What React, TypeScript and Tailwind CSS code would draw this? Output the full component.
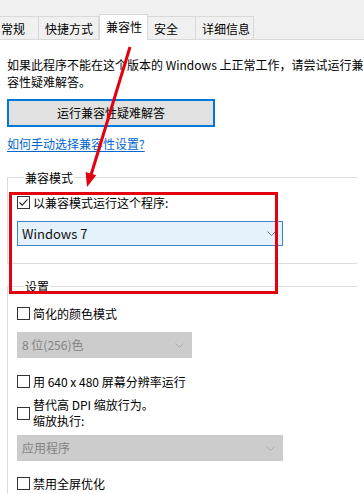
import React from "react";

const FONT = "font-['Microsoft_YaHei','Noto_Sans_CJK_SC',sans-serif]";

function Checkbox({ checked = false }: { checked?: boolean }) {
  return (
    <span className="w-[13px] h-[13px] border border-[#333333] bg-white flex items-center justify-center shrink-0">
      {checked && (
        <svg width="11" height="11" viewBox="0 0 11 11">
          <polyline
            points="1.5,5.5 4.2,8.2 9.5,2.3"
            fill="none"
            stroke="#222"
            strokeWidth="1.1"
          />
        </svg>
      )}
    </span>
  );
}

function Chevron({ color }: { color: string }) {
  return (
    <svg width="9" height="5" viewBox="0 0 9 5">
      <polyline points="0.5,0.5 4.5,4.5 8.5,0.5" fill="none" stroke={color} strokeWidth="1" />
    </svg>
  );
}

interface SelectProps {
  label: string;
  width: string;
  disabled?: boolean;
}

function Select({ label, width, disabled }: SelectProps) {
  if (disabled) {
    return (
      <div className={`${width} h-[26px] bg-[#cccccc] flex items-center justify-between pl-[5px] pr-[8px]`}>
        <span className="text-[12px] text-[#838383]">{label}</span>
        <Chevron color="#adadad" />
      </div>
    );
  }
  return (
    <div className={`${width} h-[25px] bg-[#e5f1fb] border border-[#3c87c8] flex items-center justify-between pl-[4px] pr-[6px]`}>
      <span className="text-[13px] text-[#111]">{label}</span>
      <Chevron color="#777" />
    </div>
  );
}

const tabs = [
  { label: "常规", w: "w-[45px] ml-[-6px] border-l" },
  { label: "快捷方式", w: "w-[60px]" },
  { label: "兼容性", w: "w-[49px]", active: true },
  { label: "安全", w: "w-[48px]" },
  { label: "详细信息", w: "w-[58px]" },
];

export default function App() {
  return (
    <div className={`relative w-[364px] h-[494px] overflow-hidden bg-white text-[12px] text-black ${FONT}`}>
      {/* tab strip */}
      <div className="h-[40px] bg-[#f0f0f0] flex items-end">
        {tabs.map((t) =>
          t.active ? (
            <div
              key={t.label}
              className={`${t.w} h-[26px] bg-white border-x border-t border-[#d9d9d9] pl-[6px] pt-[3px] leading-[18px] whitespace-nowrap`}
            >
              {t.label}
            </div>
          ) : (
            <div
              key={t.label}
              className={`${t.w} h-[24px] bg-[#f0f0f0] border-t border-r border-b border-[#d9d9d9] pl-[6px] leading-[24px] whitespace-nowrap`}
            >
              {t.label}
            </div>
          )
        )}
        <div className="flex-1 h-full border-b border-[#d9d9d9]" />
      </div>

      <div className="px-[7px]">
        <p className="mt-[16px] leading-[17px] whitespace-nowrap">
          如果此程序不能在这个版本的 Windows 上正常工作，请尝试运行兼容性
          <br />
          容性疑难解答。
        </p>

        <button className="mt-[9px] w-[208px] h-[28px] border-2 border-[#0078d7] bg-[#e1e1e1] flex items-center justify-center text-[12px]">
          运行兼容性疑难解答
        </button>

        <div className="mt-[8px] leading-[17px] text-[#0066cc] underline underline-offset-2">
          如何手动选择兼容性设置?
        </div>

        <fieldset className="mt-[17px] border-l border-t border-b border-[#dcdcdc] pl-[9px] pb-[17px] pt-[8px]">
          <legend className="ml-[7px] px-[1px] leading-[17px]">兼容模式</legend>
          <div className="flex items-center gap-[3px] leading-[17px]">
            <Checkbox checked />
            <span>以兼容模式运行这个程序:</span>
          </div>
          <div className="mt-[10px]">
            <Select label="Windows 7" width="w-[266px]" />
          </div>
        </fieldset>

        <fieldset className="mt-[14px] border-l border-t border-[#dcdcdc] pl-[9px] pt-[10px] pb-[20px]">
          <legend className="ml-[7px] px-[1px] leading-[17px]">设置</legend>
          <div className="flex items-center gap-[3px] leading-[17px]">
            <Checkbox />
            <span>简化的颜色模式</span>
          </div>
          <div className="mt-[10px]">
            <Select label="8 位(256)色" width="w-[175px]" disabled />
          </div>
          <div className="mt-[15px] flex items-center gap-[3px] leading-[17px]">
            <Checkbox />
            <span>用 640 x 480 屏幕分辨率运行</span>
          </div>
          <div className="mt-[7px] flex items-center gap-[3px] leading-[16px]">
            <Checkbox />
            <span>
              替代高 DPI 缩放行为。
              <br />
              缩放执行:
            </span>
          </div>
          <div className="mt-[6px]">
            <Select label="应用程序" width="w-[266px]" disabled />
          </div>
          <div className="mt-[14px] flex items-center gap-[3px] leading-[17px]">
            <Checkbox />
            <span>禁用全屏优化</span>
          </div>
        </fieldset>
      </div>

      {/* red annotations */}
      <div className="absolute left-[9px] top-[192px] w-[269px] h-[102px] border-[3px] border-[#e3000f] pointer-events-none" />
      <svg
        className="absolute left-0 top-0 pointer-events-none"
        width="364"
        height="494"
        viewBox="0 0 364 494"
      >
        <line x1="130" y1="47" x2="91" y2="175" stroke="#e3000f" strokeWidth="3" />
        <polygon points="87,187 85.6,172 96.2,175.2" fill="#e3000f" />
      </svg>
    </div>
  );
}
